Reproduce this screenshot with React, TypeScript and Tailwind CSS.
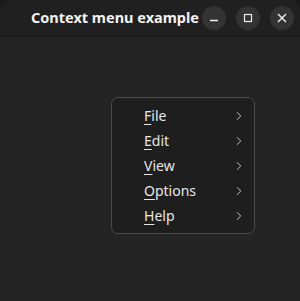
import { ChevronRight } from 'lucide-react';

const items = [
  { key: 'F', rest: 'ile' },
  { key: 'E', rest: 'dit' },
  { key: 'V', rest: 'iew' },
  { key: 'O', rest: 'ptions' },
  { key: 'H', rest: 'elp' },
];

export default function App() {
  return (
    <div className="w-[300px] h-[301px] bg-[#1a1a1a] overflow-hidden" style={{ fontFamily: '"Noto Sans", "DejaVu Sans", sans-serif' }}>
      <div className="w-full h-full flex flex-col rounded-t-[12px] overflow-hidden bg-[#242424]">
        {/* Title bar */}
        <div className="h-[37px] flex items-center bg-[#202020] border-b border-[#161616] shrink-0">
          <div className="flex-1 flex justify-end pr-[3px]">
            <span className="text-[14.5px] font-bold text-[#f2f2f2]">Context menu example</span>
          </div>
          <div className="flex items-center gap-[10px] pr-[6px] text-[#ececec]">
            <button className="w-[24px] h-[24px] rounded-full bg-[#333333] flex items-center justify-center">
              <svg width="10" height="10" viewBox="0 0 10 10">
                <line x1="1" y1="7.5" x2="9" y2="7.5" stroke="currentColor" strokeWidth="1.5" />
              </svg>
            </button>
            <button className="w-[24px] h-[24px] rounded-full bg-[#333333] flex items-center justify-center">
              <svg width="10" height="10" viewBox="0 0 10 10">
                <rect x="1.5" y="1.5" width="7" height="7" fill="none" stroke="currentColor" strokeWidth="1.2" />
              </svg>
            </button>
            <button className="w-[24px] h-[24px] rounded-full bg-[#333333] flex items-center justify-center">
              <svg width="10" height="10" viewBox="0 0 10 10">
                <path d="M1 1L9 9M9 1L1 9" stroke="currentColor" strokeWidth="1.5" />
              </svg>
            </button>
          </div>
        </div>

        {/* Body */}
        <div className="flex-1 pt-[60px] pl-[111px]">
          <div className="w-[144px] rounded-[7px] border border-[#4a4a4a] bg-[#1e1e1e] py-[5px]">
            {items.map((item) => (
              <div key={item.key} className="h-[25px] flex items-center pl-[32px] pr-[8px] text-[14px] text-[#e6e6e6]">
                <span className="flex-1">
                  <span className="underline underline-offset-[3px]">{item.key}</span>
                  {item.rest}
                </span>
                <ChevronRight size={14} strokeWidth={1.5} className="text-[#d8d8d8]" />
              </div>
            ))}
          </div>
        </div>
      </div>
    </div>
  );
}
